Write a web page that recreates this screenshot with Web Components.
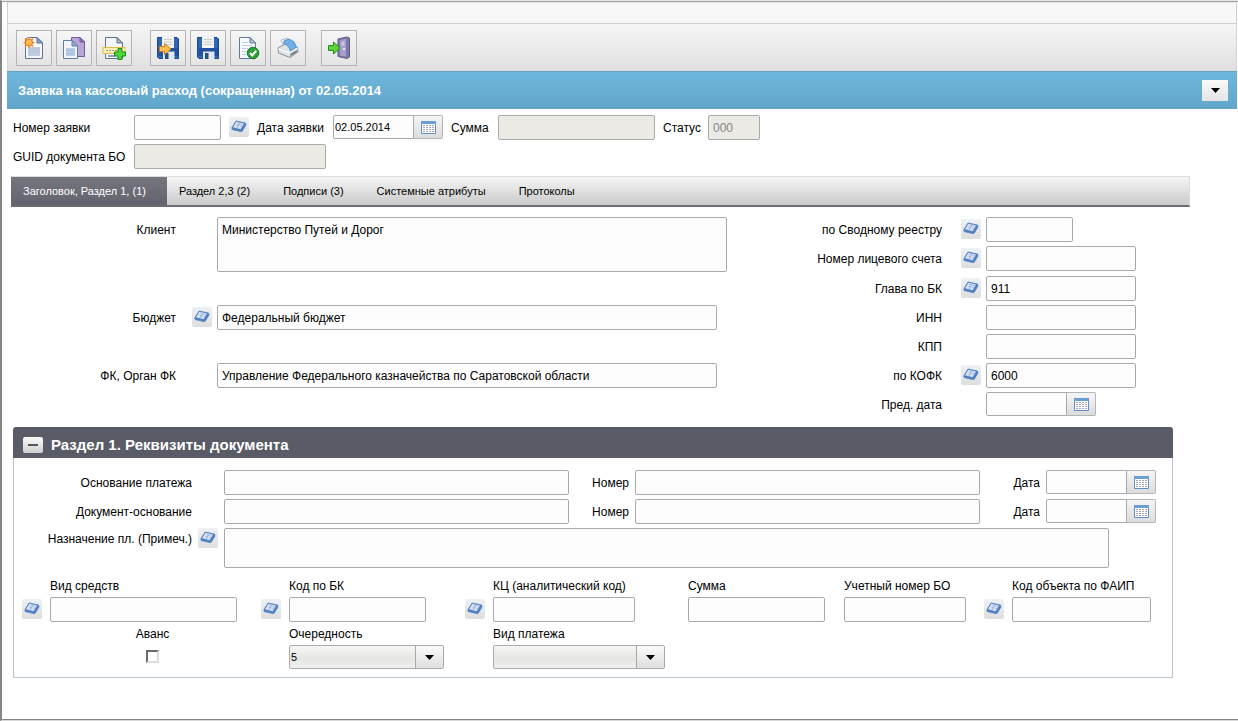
<!DOCTYPE html>
<html lang="ru">
<head>
<meta charset="utf-8">
<title>Заявка на кассовый расход</title>
<style>
  body { margin: 0; background: #fff; color: #000; font: 12px/16px "Liberation Sans", Arial, sans-serif; }
</style>
</head>
<body>
<request-page></request-page>

<script>
const ICONS = {
  create: `<path d="M3.5 3.500V22.500H20.500V7L15 1.500H5.500Z" fill="#f4f8fd" stroke="#5f7396"/><path d="M15 1.500V7H20.500Z" fill="#8c9dbb" stroke="#5f7396"/><path d="M6 11H18V20H6Z" fill="#c0cbe2"/><path d="M6 13H18M6 16H18" stroke="#b2bedb"/><path d="M7 1v11M1.500 6.500h11M3 2.500l8 8M11 2.500l-8 8" stroke="#ef8a2c" stroke-width="1.500"/><circle cx="7" cy="6.500" r="3.600" fill="#ffb64a" stroke="#e87f23"/>`,
  copy: `<path d="M9.500 1.500H18L22.500 6V20.500H9.500Z" fill="#b9a5d6" stroke="#6f5c98"/><path d="M18 1.500V6H22.500Z" fill="#8b76b4" stroke="#6f5c98"/><path d="M1.500 4.500H10L15.500 10V22.500H1.500Z" fill="#f2f6fc" stroke="#5f7fa5"/><path d="M10 4.500V10H15.500Z" fill="#9cb0cd" stroke="#5f7fa5"/><path d="M4 12H13V20H4Z" fill="#b7cbe6"/><path d="M4 14.500H13M4 17.500H13" stroke="#a8bddc"/>`,
  addline: `<path d="M3.500 1.500H15L20.500 7V22.500H3.500Z" fill="#f4f7fb" stroke="#63738f"/><path d="M15 1.500V7H20.500Z" fill="#a9b6ca" stroke="#63738f"/><path d="M6 20H13" stroke="#8fa2c4" stroke-width="2"/><path d="M1 11.500H23V17.500H1Z" fill="#fff0b0" stroke="#dfba45"/><path d="M4 14.500H15" stroke="#9a9a86" stroke-dasharray="2 1"/><path d="M16 12.500h4v3.500h3.500v4H20v3.500h-4V20h-3.500v-4H16Z" fill="#4fd634" stroke="#178a17"/>`,
  save: `<path d="M1.500 1.500H21L22.500 3V22.500H3L1.500 21Z" fill="#2d66b5" stroke="#1c4688"/><path d="M2.500 12H22V20H2.500Z" fill="#1f519f"/><path d="M6 1H18V12H6Z" fill="#f3f3f1"/><path d="M8 3.500H16M8 6H16M8 8.500H16" stroke="#c7ccd2"/><path d="M7 15.500H18.500V23H7Z" fill="#dfe6ef"/><path d="M9 17H12.500V23H9Z" fill="#244f91"/>`,
  check: `<path d="M3.500 1.500H14L19.500 7V22.500H3.500Z" fill="#f7fafd" stroke="#627a9e"/><path d="M14 1.500V7H19.500Z" fill="#b3c3da" stroke="#627a9e"/><path d="M6 6.500H12M6 9.500H16M6 12.500H12M6 15.500H10M6 18.500H10" stroke="#c0cfe5"/><circle cx="17" cy="17" r="5.800" fill="#2f9e38" stroke="#1c7c2a"/><path d="M14 17l2.300 2.500 4-4.800" fill="none" stroke="#fff" stroke-width="2"/>`,
  print: `<path d="M5 4L12 2L17 9L9 12Z" fill="#f6f8fa" stroke="#b6bcc5"/><path d="M2 12L9 8L21.500 11.500L22 16L14 21.500L2.500 17Z" fill="#dfe3e8" stroke="#8b929d"/><path d="M2.500 13L13.500 17L21.500 12.500" fill="none" stroke="#f9fafb" stroke-width="1.500"/><path d="M8 5Q13 1.500 18 6L20.500 11L14.500 15Q13 9 8 8Z" fill="#6fb1e6" stroke="#4b8fcb"/><path d="M14 17.500V21.500L22 16V13Z" fill="#a1a7b0"/><path d="M15.500 18.500L20.500 15.500" stroke="#5c616a"/>`,
  exit: `<path d="M11 3L20 1L22.500 2V21L20 22.500L11 20.500Z" fill="#7f7aa8" stroke="#5d5985"/><path d="M13 4L19 3V20.500L13 19.500Z" fill="#a5a1ca"/><path d="M14.500 6L17.500 5.500V9.500L14.500 10Z" fill="#c9c7e2"/><path d="M17 12v2" stroke="#fff" stroke-width="1.500"/><path d="M1.500 9.500H6.500V6L13 12L6.500 18V14.500H1.500Z" fill="#5fd13c" stroke="#2c8d1f"/>`
};
ICONS.saveclose = ICONS.save + `<path d="M3.500 10.500H8.500V7.500L15 13L8.500 18.500V15.500H3.500Z" fill="#ffbe4d" stroke="#d07c16"/>`;

const BOOK = `<svg width="20" height="20" viewBox="0 0 20 20" aria-hidden="true"><path d="M7 4L16.500 6L17 8L13 14.500H11.500L3 12.500V10.500Z" fill="#5180c2" stroke="#5180c2" stroke-width=".8" stroke-linejoin="round"/><path d="M7.300 4.800L15 6.400L11.600 12.200L4 10.200Z" fill="#d5e1f5"/><path d="M11.300 5.900L7.800 11.200" stroke="#7f9fd6" stroke-width=".8"/><path d="M8.500 6.500l1.500.4M7.500 8.200l1.500.4M12 7.500l1.500.3M11 9.200l1.500.3" stroke="#98a6d4" stroke-width=".7"/></svg>`;
const CALENDAR = `<svg width="15" height="13" viewBox="0 0 15 13" aria-hidden="true"><path d="M.5.5h14v12H.5Z" fill="#fff" stroke="#5f8fc4"/><path d="M0 0h15v3H0Z" fill="#6d9ed3"/><path d="M2 4.500h11M2 6.500h11M2 8.500h11M2 10.500h11" stroke="#a3a9b3" stroke-dasharray="2 1"/></svg>`;
const ARROW = `<svg width="9" height="5" viewBox="0 0 9 5" aria-hidden="true"><path d="M0 0H9L4.500 5Z" fill="#000"/></svg>`;

const define = (name, css, html) => customElements.define(name, class extends HTMLElement {
  connectedCallback() {
    if (this.shadowRoot) return;
    const root = this.attachShadow({ mode: 'open' });
    root.innerHTML = `<style>*{box-sizing:border-box}${css}</style>` + (typeof html === 'function' ? html(this) : html);
  }
});

define('tool-button', `
  :host { display: block; }
  button { display: flex; align-items: center; justify-content: center; width: 36px; height: 36px; padding: 0;
    border: 1px solid #b4b4b4; background: linear-gradient(#f6f6f6, #e4e4e4); }`,
  el => `<button type="button" aria-label="${el.getAttribute('name')}"><svg width="24" height="24" viewBox="0 0 24 24" aria-hidden="true">${ICONS[el.getAttribute('icon')]}</svg></button>`);

define('tool-bar', `
  :host { display: flex; gap: 15px; padding: 6px 8px 5px; border: 1px solid #d6d6d6; border-top: 0; border-bottom: 0;
    background: linear-gradient(#f6f6f6, #dfdfdf); }`, `<slot></slot>`);

define('tool-group', `:host { display: flex; gap: 4px; }`, `<slot></slot>`);

define('title-bar', `
  :host { display: flex; align-items: center; justify-content: space-between; height: 38px; padding: 0 9px 0 11px;
    border-top: 1px solid #5fa3c6; background: linear-gradient(#6db7dc, #62a5ca); }
  h1 { margin: 0; color: #fff; font-size: 13px; line-height: 16px; }
  button { display: flex; align-items: center; justify-content: center; width: 26px; height: 21px; padding: 0;
    border: 0; background: linear-gradient(#fafafa, #e4e4e4); }`,
  `<h1><slot></slot></h1><button type="button" aria-label="Меню">${ARROW}</button>`);

define('tab-item', `
  :host { display: flex; }
  button { padding: 0 21px 0 12px; border: 0; background: none; color: #000; font: inherit; font-size: 11px; white-space: nowrap; }
  :host([selected]) button { background: linear-gradient(#75757f, #646470); color: #fff; }`,
  el => `<button type="button" role="tab" aria-selected="${el.hasAttribute('selected')}"><slot></slot></button>`);

define('tab-strip', `
  :host { display: flex; height: 31px; border: 1px solid #dcdcdc; border-left: 0;
    border-bottom: 2px solid #6c6c76; background: linear-gradient(#f5f5f5, #cbcbcb); }`, `<slot></slot>`);

/* A labelled control: text, date, area, select or check. */
define('form-field', `
  :host { display: flex; align-items: flex-start; }
  label { flex: none; width: var(--label-width, auto); margin-right: var(--label-gap, 8px); padding-top: 2px;
    line-height: var(--label-line, 23px); text-align: var(--label-align, left); white-space: nowrap; }
  .line { display: flex; flex: 1; align-items: flex-start; min-width: 0; }
  .spot { flex: none; width: 20px; height: 25px; padding-top: var(--spot-top, 2px); margin-right: var(--spot-gap, 5px); }
  .spot button { display: block; width: 20px; height: 20px; padding: 0; border: 0; border-radius: 2px; background: linear-gradient(#eef1f5, #dedede); }
  input, textarea, select { display: block; width: var(--control-width, 100%); min-width: var(--control-width, 0); height: var(--control-height, 25px);
    margin: 0; padding: 0 4px; border: 1px solid #a9a9ad; border-radius: 2px; outline: 0; background: #fdfdfd;
    color: #000; font: inherit; }
  textarea { padding-top: 4px; resize: none; }
  input:disabled { background: #ebeae5; color: #858585; }
  .date { display: flex; flex: none; }
  .date input { width: 81px; min-width: 0; height: 24px; padding: 0 1px; border-radius: 2px 0 0 2px; font-size: 11px; }
  .date button { display: flex; align-items: center; justify-content: center; width: 29px; height: 24px; padding: 0;
    border: 1px solid #b5b5b8; border-left: 0; border-radius: 0 2px 2px 0; background: linear-gradient(#f5f5f5, #dcdcdc); }
  .combo { position: relative; flex: none; width: var(--control-width); }
  select { width: 100%; height: 24px; padding: 0 28px 0 1px; appearance: none; background: linear-gradient(#f6f6f5, #e5e5e2 60%, #f0f0ee); font-size: 11px; }
  .combo span { position: absolute; top: 1px; right: 1px; bottom: 1px; display: flex; align-items: center; justify-content: center;
    width: 28px; border-left: 1px solid #a9a9ad; background: linear-gradient(#fafafa, #dfdfdf); pointer-events: none; }
  input[type=checkbox] { width: 13px; height: 13px; padding: 0; appearance: none; border: 2px solid; border-radius: 0;
    border-color: #6b6b6b #dedede #dedede #6b6b6b; background: #fff; }
  :host([stacked]) { flex-direction: column; }
  :host([stacked]) label { width: auto; margin: 0; padding-left: 28px; line-height: 21px; }
  :host([stacked]) .line { width: 100%; --spot-gap: 8px; }
  :host([type=check]) { align-items: center; }
  :host([type=check]) label { padding-left: 0; }
  :host([type=check]) .line { width: auto; padding-top: 5px; }`,
  el => {
    const a = n => el.getAttribute(n) || '';
    const value = a('value');
    const off = el.hasAttribute('disabled') ? ' disabled' : '';
    const control = {
      date: `<div class="date"><input id="c" type="text" value="${value}"><button type="button" aria-label="Календарь">${CALENDAR}</button></div>`,
      area: `<textarea id="c">${value}</textarea>`,
      select: `<div class="combo"><select id="c"><option>${value}</option></select><span>${ARROW}</span></div>`,
      check: `<input id="c" type="checkbox">`
    }[a('type')] || `<input id="c" type="text" value="${value}"${off}>`;
    const spot = el.hasAttribute('lookup') ? `<div class="spot"><button type="button" aria-label="Справочник">${BOOK}</button></div>`
      : el.hasAttribute('spot') ? `<div class="spot"></div>` : '';
    return `<label for="c">${a('label')}</label><div class="line">${spot}${control}</div>`;
  });

define('lookup-button', `
  :host { display: block; padding-top: 2px; }
  button { display: block; width: 20px; height: 20px; padding: 0; border: 0; border-radius: 2px; background: linear-gradient(#eef1f5, #dedede); }`,
  `<button type="button" aria-label="Справочник">${BOOK}</button>`);

define('section-panel', `
  :host { display: block; }
  header { display: flex; align-items: center; gap: 8px; height: 31px; padding: 4px 10px 0; border-radius: 3px 3px 0 0; background: #595b66; }
  button { display: flex; align-items: center; justify-content: center; width: 20px; height: 16px; padding: 0; border: 0;
    border-radius: 2px; background: linear-gradient(#fafafa, #cfcfcf); }
  i { width: 10px; height: 2px; background: #55565c; }
  h2 { margin: 0; color: #fff; font-size: 15px; line-height: 20px; }
  .body { padding: 12px 16px 7px 8px; border: 1px solid #b9c4cc; border-top: 0; }`,
  el => `<header><button type="button" aria-label="Свернуть"><i></i></button><h2>${el.getAttribute('heading')}</h2></header><div class="body"><slot></slot></div>`);

define('request-page', `
  :host { display: flex; flex-direction: column; box-sizing: border-box; min-height: 100vh; border: 0 solid #858585; border-left-width: 2px;
    border-top: 1px solid #e6e6e6; border-bottom: 1px solid #d9d9d9; }
  main { flex: 1; padding: 0 1px 0 5px; border-top: 1px solid #a4a4a4; border-bottom: 1px solid #858585; }
  .strip { height: 22px; border: 1px solid #cfcfcf; border-top-color: #e4e4e4; background: #f8f8f8; }
  .documents { padding-right: 3px; }
  .row { display: flex; gap: 8px; padding: 0 6px; }
  .top { padding-top: 6px; }
  .second { padding-top: 4px; }
  tab-strip { margin: 7px 47px 0 4px; }
  .details { display: flex; justify-content: space-between; padding: 10px 101px 0 6px; --label-width: 163px; --label-align: right; }
  .grid { display: grid; grid-template-rows: 25px 25px 26px 25px 25px 25px 25px; row-gap: 4px; align-items: end; }
  .left { --label-gap: 16px; }
  .right { --label-gap: 19px; --control-width: 150px; }
  .client { grid-row: 1 / span 3; align-self: start; --control-width: 510px; --control-height: 55px; }
  .budget { grid-row: 4; --control-width: 500px; }
  .organ { grid-row: 6; --control-width: 500px; }
  section-panel { margin: 10px 64px 0 6px; }
  .pay { display: grid; grid-template-columns: 547fr 411fr 176fr; margin-bottom: 4px; --label-width: 60px; --label-gap: 6px; --label-align: right; --spot-gap: 6px; }
  .first { --label-width: 170px; }
  .purpose { grid-template-columns: 1fr; margin: 0 47px 6px 0; --control-height: 40px; --label-line: 18px; --spot-top: 0; }
  .codes { display: grid; margin-right: 5px;
    grid-template-columns: minmax(0, 239fr) minmax(0, 204fr) minmax(0, 195fr) minmax(0, 156fr) minmax(0, 168fr) minmax(0, 167fr); }
  .advance { padding-left: 22px; }`,
  `<main>
    <div class="strip"></div>
    <tool-bar>
      <tool-group class="documents">
        <tool-button icon="create" name="Создать"></tool-button><tool-button icon="copy" name="Копировать"></tool-button><tool-button icon="addline" name="Добавить"></tool-button>
      </tool-group>
      <tool-group>
        <tool-button icon="saveclose" name="Сохранить и закрыть"></tool-button><tool-button icon="save" name="Сохранить"></tool-button><tool-button icon="check" name="Проверить"></tool-button><tool-button icon="print" name="Печать"></tool-button>
      </tool-group>
      <tool-group><tool-button icon="exit" name="Выход"></tool-button></tool-group>
    </tool-bar>
    <title-bar>Заявка на кассовый расход (сокращенная) от 02.05.2014</title-bar>
    <div class="row top">
      <form-field label="Номер заявки" style="--label-width:113px;--control-width:87px"></form-field>
      <lookup-button></lookup-button>
      <form-field type="date" label="Дата заявки" value="02.05.2014" style="--label-width:68px"></form-field>
      <form-field label="Сумма" disabled style="--label-width:39px;--control-width:157px"></form-field>
      <form-field label="Статус" value="000" disabled style="--label-width:37px;--control-width:52px"></form-field>
    </div>
    <div class="row second">
      <form-field label="GUID документа БО" disabled style="--label-width:113px;--control-width:192px"></form-field>
    </div>
    <tab-strip role="tablist">
      <tab-item selected>Заголовок, Раздел 1, (1)</tab-item><tab-item>Раздел 2,3 (2)</tab-item><tab-item>Подписи (3)</tab-item><tab-item>Системные атрибуты</tab-item><tab-item>Протоколы</tab-item>
    </tab-strip>
    <div class="details">
      <div class="grid left">
        <form-field class="client" type="area" spot label="Клиент" value="Министерство Путей и Дорог"></form-field>
        <form-field class="budget" lookup label="Бюджет" value="Федеральный бюджет"></form-field>
        <form-field class="organ" spot label="ФК, Орган ФК" value="Управление Федерального казначейства по Саратовской области"></form-field>
      </div>
      <div class="grid right">
        <form-field lookup label="по Сводному реестру" style="--control-width:87px"></form-field>
        <form-field lookup label="Номер лицевого счета"></form-field>
        <form-field lookup label="Глава по БК" value="911"></form-field>
        <form-field spot label="ИНН"></form-field>
        <form-field spot label="КПП"></form-field>
        <form-field lookup label="по КОФК" value="6000"></form-field>
        <form-field type="date" spot label="Пред. дата"></form-field>
      </div>
    </div>
    <section-panel heading="Раздел 1. Реквизиты документа">
      <div class="pay">
        <form-field class="first" spot label="Основание платежа"></form-field>
        <form-field label="Номер"></form-field>
        <form-field type="date" label="Дата"></form-field>
      </div>
      <div class="pay">
        <form-field class="first" spot label="Документ-основание"></form-field>
        <form-field label="Номер"></form-field>
        <form-field type="date" label="Дата"></form-field>
      </div>
      <div class="pay purpose">
        <form-field class="first" type="area" lookup label="Назначение пл. (Примеч.)"></form-field>
      </div>
      <div class="codes">
        <form-field stacked lookup label="Вид средств" style="--control-width:187px"></form-field>
        <form-field stacked lookup label="Код по БК" style="--control-width:137px"></form-field>
        <form-field stacked lookup label="КЦ (аналитический код)" style="--control-width:142px"></form-field>
        <form-field stacked spot label="Сумма" style="--control-width:137px"></form-field>
        <form-field stacked spot label="Учетный номер БО" style="--control-width:122px"></form-field>
        <form-field stacked lookup label="Код объекта по ФАИП" style="--control-width:139px"></form-field>
        <form-field class="advance" stacked type="check" label="Аванс"></form-field>
        <form-field stacked type="select" spot label="Очередность" value="5" style="--control-width:155px"></form-field>
        <form-field stacked type="select" spot label="Вид платежа" style="--control-width:172px"></form-field>
      </div>
    </section-panel>
  </main>`);
</script>
</body>
</html>
